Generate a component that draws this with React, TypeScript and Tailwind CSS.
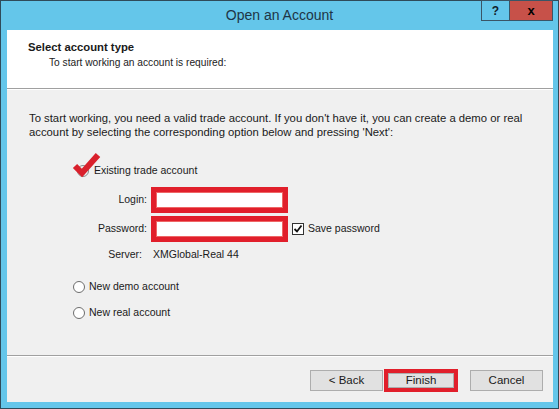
import React from "react";

const font = { fontFamily: '"Liberation Sans", Arial, sans-serif' };

function Radio() {
  return (
    <span className="inline-block w-[12px] h-[12px] rounded-full border border-[#6d6d6d] bg-white shrink-0" />
  );
}

function RedField() {
  return (
    <div className="w-[137px] h-[26px] border-[5px] border-[#e11f2b] bg-white shrink-0">
      <div className="w-full h-full border border-[#e66] bg-white" />
    </div>
  );
}

export default function App() {
  return (
    <div className="w-[559px] h-[409px] bg-[#2f4b5a] p-px text-[#1a1a1a]" style={font}>
      <div className="w-full h-full bg-[#64c6ea] flex flex-col">
        {/* Title bar */}
        <div className="h-[29px] relative flex items-center justify-center shrink-0">
          <span className="text-[14px] text-[#1e3546] -mt-[1px]">Open an Account</span>
          <div className="absolute top-[-1px] right-[5px] flex h-[21px]">
            <div className="w-[28px] border border-[#3a5566] border-r-0 flex items-center justify-center text-[12px] font-bold text-[#10212c]">?</div>
            <div className="w-[44px] bg-[#c75149] border border-[#3a5566] flex items-center justify-center text-[13px] font-bold text-black">x</div>
          </div>
        </div>

        {/* Client area */}
        <div className="h-[372px] ml-[6px] mr-[5px] flex flex-col bg-[#f0f0f0] shrink-0">
          <div className="h-[58px] bg-white pl-[21px] pt-[10px] shrink-0">
            <div className="text-[11.3px] font-bold leading-[15px]">Select account type</div>
            <div className="text-[10.2px] leading-[15px] pl-[21px] text-[#222]">To start working an account is required:</div>
          </div>
          <div className="h-px bg-[#a0a0a0] shrink-0" />
          <div className="h-px bg-white shrink-0" />

          <div className="h-[265px] shrink-0 overflow-hidden pl-[22px] pt-[21px] text-[10.5px]">
            <p className="leading-[14px] text-[11.3px] whitespace-nowrap">
              To start working, you need a valid trade account. If you don't have it, you can create a demo or real
              <br />
              account by selecting the corresponding option below and pressing 'Next':
            </p>

            <div className="mt-[25px] ml-[48px] flex items-center gap-[5px] relative h-[14px]">
              <span className="inline-block w-[12px] h-[12px] rounded-full border border-[#888] bg-[#eee]" />
              <span>Existing trade account</span>
              <svg className="absolute left-[-5px] top-[-13px]" width="30" height="28" viewBox="0 0 30 28">
                <path d="M3 15 L10 22 L26 4" fill="none" stroke="#d9202c" strokeWidth="6" strokeLinejoin="miter" />
              </svg>
            </div>

            <div className="mt-[9px] flex items-center h-[26px]">
              <span className="w-[122px] text-right pr-[4px]">Login:</span>
              <RedField />
            </div>
            <div className="mt-[3px] flex items-center h-[26px]">
              <span className="w-[122px] text-right pr-[4px]">Password:</span>
              <RedField />
              <span className="ml-[4px] w-[12px] h-[12px] border border-[#333] bg-white flex items-center justify-center">
                <svg width="10" height="10" viewBox="0 0 10 10">
                  <path d="M1.5 5 L4 7.5 L8.5 1.5" fill="none" stroke="#111" strokeWidth="1.8" />
                </svg>
              </span>
              <span className="ml-[4px]">Save password</span>
            </div>
            <div className="mt-[5px] flex items-center h-[16px]">
              <span className="w-[124px] text-right pr-[11px]">Server:</span>
              <span>XMGlobal-Real 44</span>
            </div>

            <div className="mt-[17px] ml-[44px] flex items-center gap-[4px] h-[14px]">
              <Radio />
              <span>New demo account</span>
            </div>
            <div className="mt-[12px] ml-[44px] flex items-center gap-[4px] h-[14px]">
              <Radio />
              <span>New real account</span>
            </div>
          </div>

          <div className="h-px bg-[#a0a0a0] shrink-0" />
          <div className="h-px bg-white shrink-0" />
          <div className="flex-1 flex items-start justify-end pt-[12px] pr-[10px] text-[11.5px]">
            <button className="w-[73px] h-[21px] bg-[#e1e1e1] border border-[#adadad] mt-[1px]">&lt; Back</button>
            <div className="ml-[1px] w-[74px] h-[23px] border-[4px] border-[#e11f2b] flex">
              <button className="w-full h-full bg-[#e1e1e1] border border-[#adadad] leading-none">Finish</button>
            </div>
            <button className="ml-[12px] w-[73px] h-[21px] bg-[#e1e1e1] border border-[#adadad] mt-[1px]">Cancel</button>
          </div>
        </div>
      </div>
    </div>
  );
}
